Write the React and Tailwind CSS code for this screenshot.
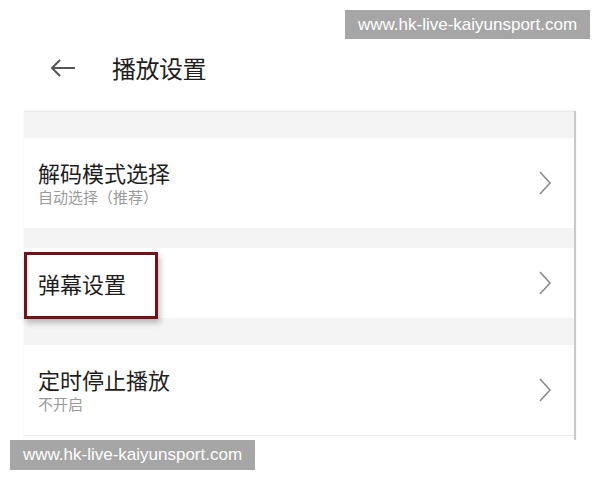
const font = { fontFamily: '"Noto Sans CJK SC", "Noto Sans", sans-serif' };

const Chevron = () => (
  <svg width="14" height="26" viewBox="0 0 14 26" className="shrink-0">
    <polyline points="2,2 12,13 2,24" fill="none" stroke="#8a8a8a" strokeWidth="1.6" />
  </svg>
);

const Row = ({ title, sub, h, children }) => (
  <div className={`relative flex items-center justify-between bg-white pl-[14px] pr-[22px] ${h}`}>
    <div className="flex flex-col">
      <span className="text-[22px] leading-[26px] text-[#1e1e1e]">{title}</span>
      {sub && <span className="text-[15px] leading-[20px] text-[#9a9a9a] mt-[2px]">{sub}</span>}
    </div>
    <Chevron />
    {children}
  </div>
);

export default function App() {
  return (
    <div className="relative w-[600px] h-[480px] bg-white overflow-hidden" style={font}>
      {/* Header */}
      <div className="h-[111px] flex items-start pt-[54px]">
        <svg width="26" height="18" viewBox="0 0 26 18" className="ml-[50px] mt-[5px]">
          <path d="M25 9H2M10 1L2 9l8 8" fill="none" stroke="#555" strokeWidth="2" />
        </svg>
        <span className="ml-[36px] text-[24px] leading-[28px] text-[#1e1e1e] tracking-[-0.5px]">播放设置</span>
      </div>

      {/* Panel */}
      <div className="ml-[24px] w-[552px] border-r-2 border-[#c9c9c9] shadow-[0_-1px_2px_rgba(0,0,0,0.06)]">
        <div className="h-[27px] bg-[#f4f4f4] border-t border-[#e8e8e8]" />
        <Row title="解码模式选择" sub="自动选择（推荐）" h="h-[90px]" />
        <div className="h-[20px] bg-[#f4f4f4]" />
        <Row title="弹幕设置" h="h-[70px]">
          <div className="absolute left-0 top-[4px] w-[134px] h-[67px] border-[3px] border-[#731018] shadow-[2px_4px_6px_rgba(0,0,0,0.25)]" />
        </Row>
        <div className="h-[27px] bg-[#f4f4f4]" />
        <Row title="定时停止播放" sub="不开启" h="h-[90px]" />
        <div className="h-[5px] border-t border-[#ececec] bg-white" />
      </div>

      {/* Watermarks */}
      <div className="absolute left-[345px] top-[10px] w-[245px] h-[29px] bg-[#a6a6a6] flex items-center justify-center text-white text-[17px]" style={{ fontFamily: '"Liberation Sans", Arial, sans-serif' }}>
        www.hk-live-kaiyunsport.com
      </div>
      <div className="absolute left-[10px] top-[440px] w-[245px] h-[30px] bg-[#a6a6a6] flex items-center justify-center text-white text-[17px]" style={{ fontFamily: '"Liberation Sans", Arial, sans-serif' }}>
        www.hk-live-kaiyunsport.com
      </div>
    </div>
  );
}
